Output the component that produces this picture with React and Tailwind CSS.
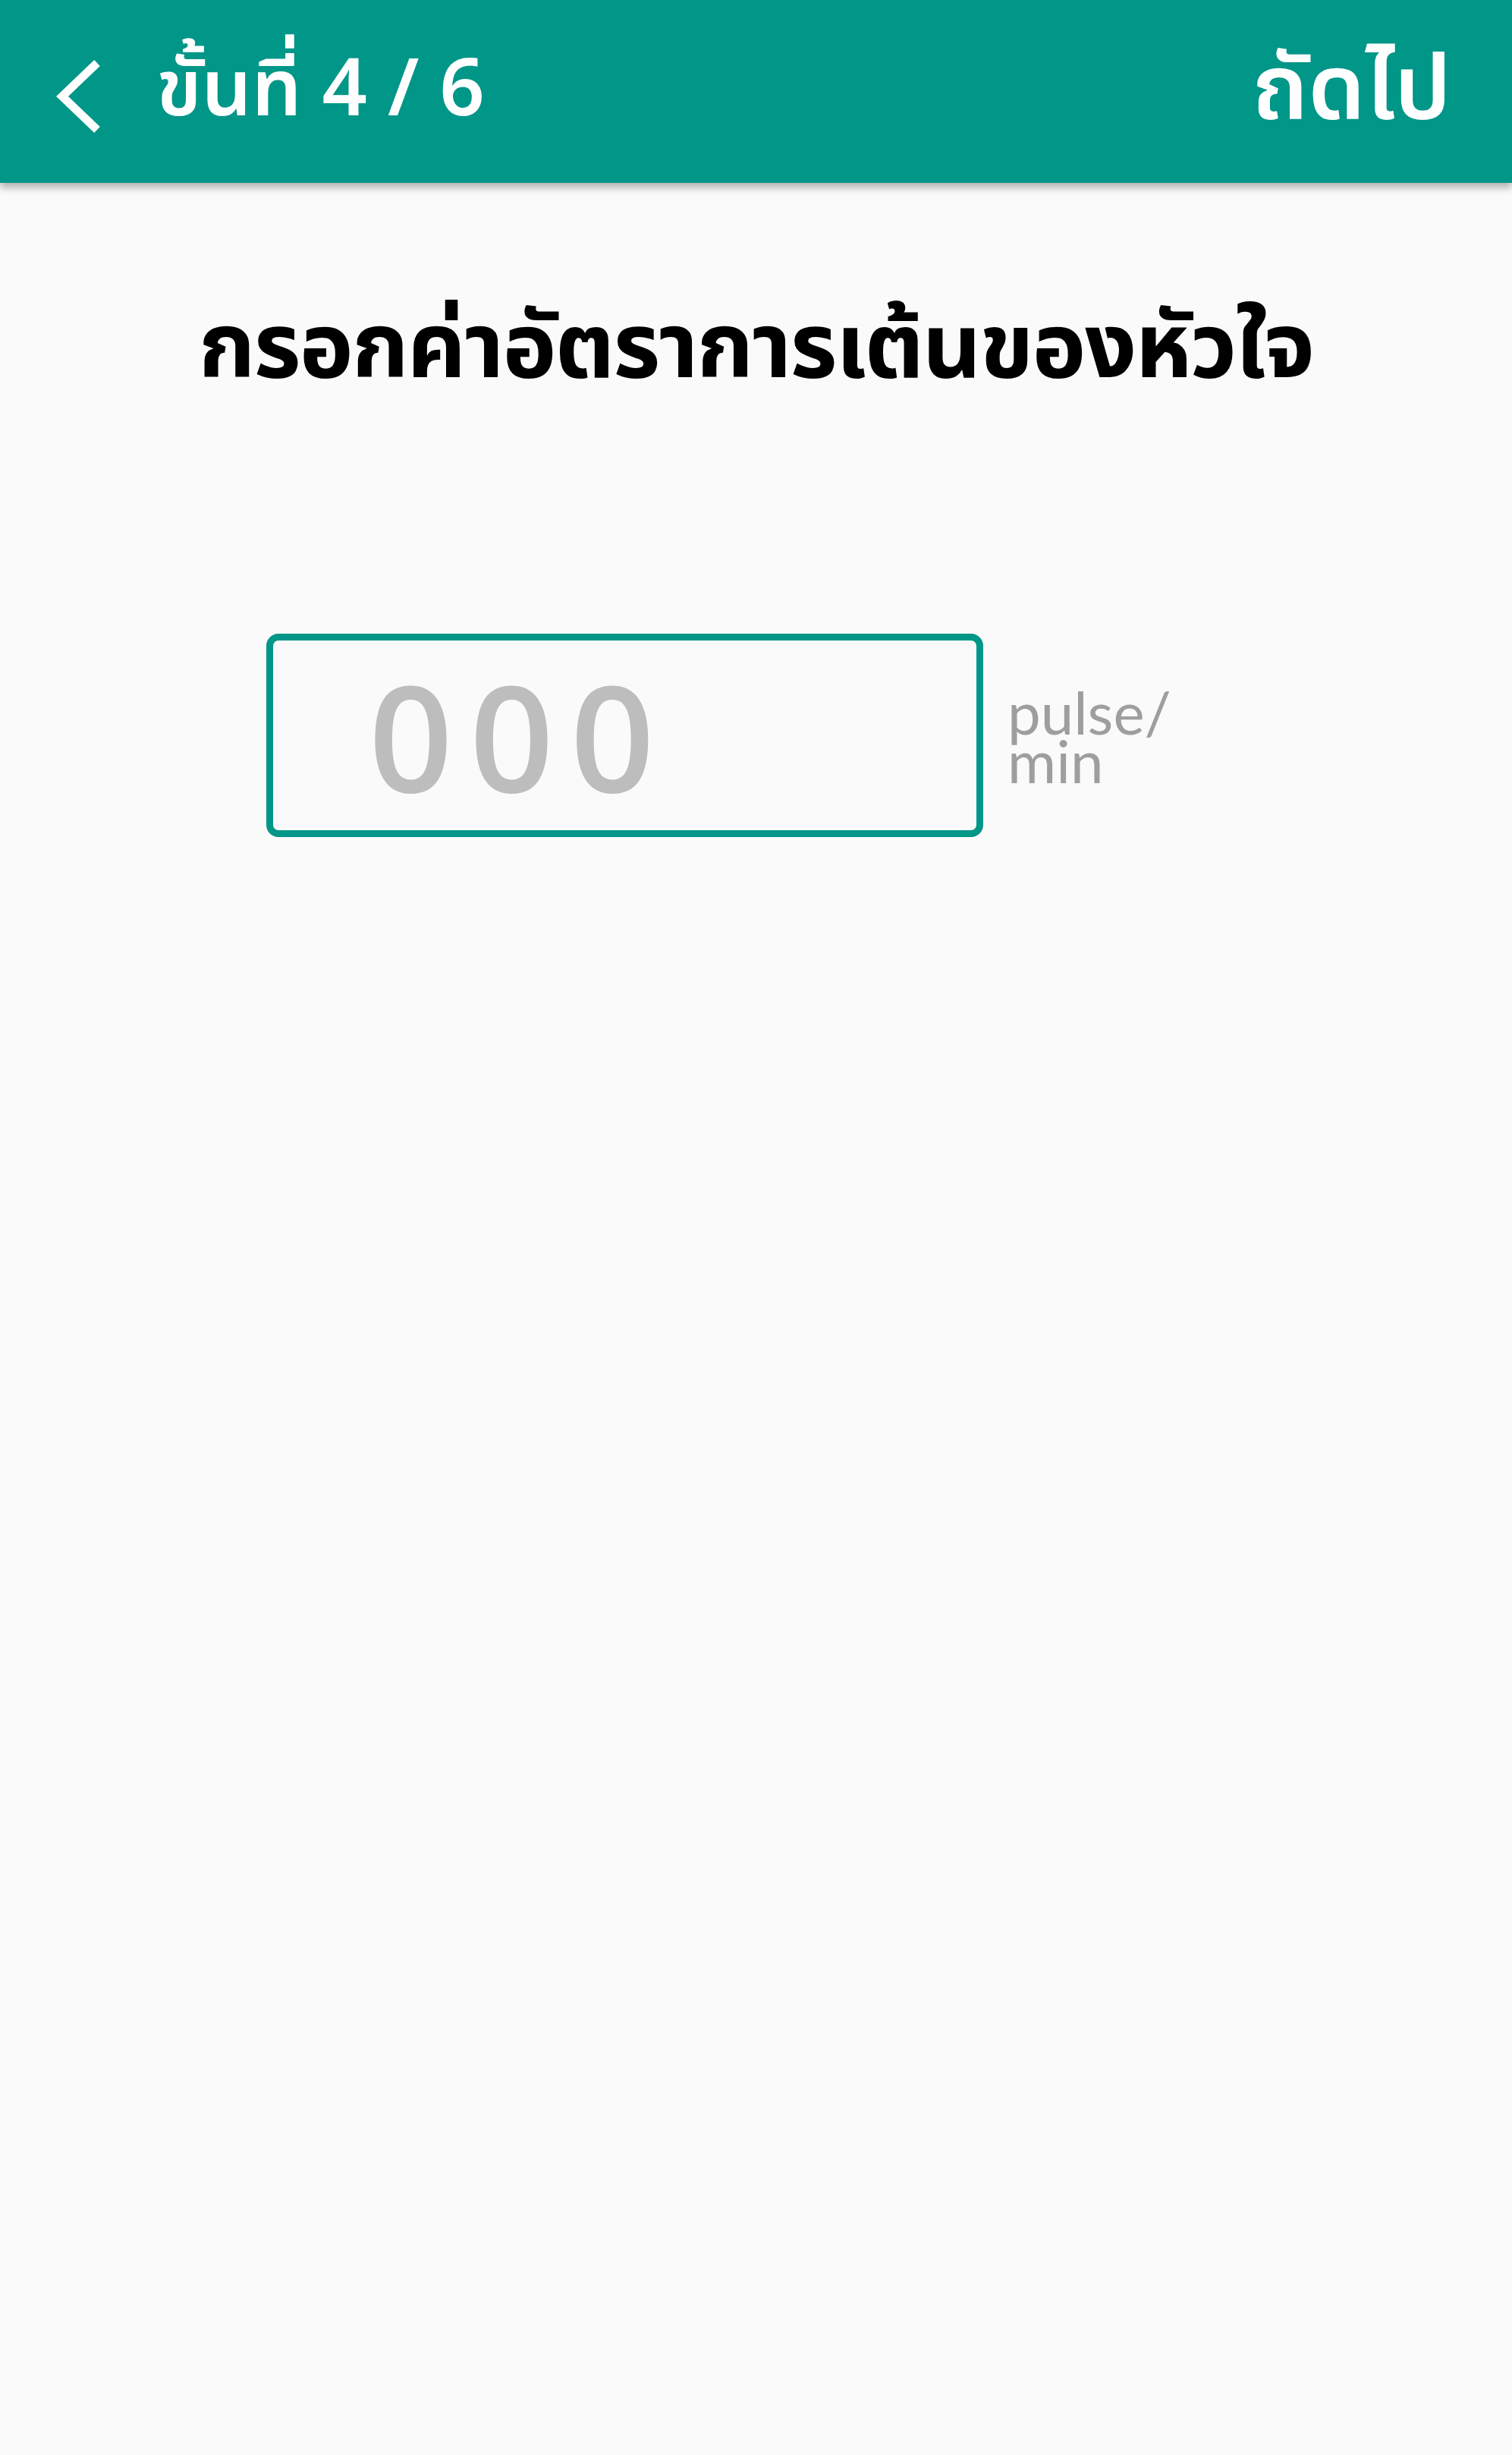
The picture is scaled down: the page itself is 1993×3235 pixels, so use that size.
import React from "react";

export default function App() {
  return (
    <div className="min-h-[3235px] w-[1993px] bg-[#fafafa]" style={{ fontFamily: '"Noto Sans Thai", "Noto Sans", Roboto, sans-serif' }}>
      <header className="relative z-10 flex h-[241px] items-center justify-between bg-[#009688] pl-[72px] pr-[80px] shadow-[0_6px_10px_rgba(0,0,0,0.3)]">
        <div className="flex items-center gap-[72px]">
          <svg width="62" height="96" viewBox="0 0 62 96" className="mt-[12px]">
            <polyline points="56,4 10,48 56,92" fill="none" stroke="white" strokeWidth="11" strokeLinecap="butt" strokeLinejoin="miter" />
          </svg>
          <span className="text-[104px] font-semibold leading-none text-white">ขั้นที่ 4 / 6</span>
        </div>
        <span className="text-[120px] font-semibold leading-none text-white">ถัดไป</span>
      </header>
      <main className="flex flex-col items-center">
        <h1 className="mt-[160px] text-[120px] font-bold leading-none tracking-[-2px] text-black">กรอกค่าอัตราการเต้นของหัวใจ</h1>
        <div className="mt-[314px] flex w-full items-center pl-[351px]">
          <div className="flex h-[268px] w-[945px] items-center rounded-[16px] border-[9px] border-[#009688] pl-[126px]">
            <span className="text-[194px] font-semibold leading-none tracking-[22px] text-[#bdbdbd]" style={{ fontFamily: '"Open Sans", sans-serif' }}>000</span>
          </div>
          <div className="ml-[32px] mt-[2px] text-[78px] leading-[64px] text-[#9e9e9e]" style={{ fontFamily: 'Lato, sans-serif' }}>
            pulse/<br />min
          </div>
        </div>
      </main>
    </div>
  );
}
